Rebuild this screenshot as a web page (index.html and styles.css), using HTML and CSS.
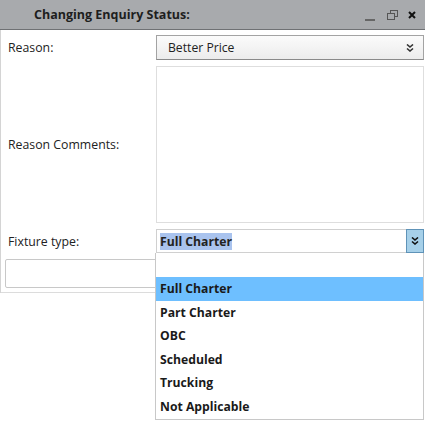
FILE: index.html
```html
<!DOCTYPE html>
<html lang="en">
<head>
    <meta charset="UTF-8">
    <title>Changing Enquiry Status</title>
    <link rel="stylesheet" href="styles.css">
</head>
<body>
    <div class="dialog">
        <div class="titlebar">
            <span class="title">Changing Enquiry Status:</span>
            <div class="controls">
                <span class="btn-min"></span>
                <svg class="btn-restore" width="11" height="10" viewBox="0 0 11 10">
                    <rect x="3.5" y="0.5" width="7" height="6" fill="none" stroke="#555" stroke-width="1"/>
                    <rect x="0.5" y="3.5" width="7" height="6" fill="#a8aaad" stroke="#555" stroke-width="1"/>
                </svg>
                <svg class="btn-close" width="8" height="8" viewBox="0 0 8 8">
                    <path d="M1 1 L7 7 M7 1 L1 7" stroke="#111" stroke-width="2"/>
                </svg>
            </div>
        </div>
        <div class="form">
            <label class="label">Reason:</label>
            <div class="select select-plain">
                <span class="value">Better Price</span>
                <svg class="chev" width="8" height="8" viewBox="0 0 8 8">
                    <path d="M1 0.5 L4 3 L7 0.5 M1 4.5 L4 7 L7 4.5" fill="none" stroke="#333" stroke-width="1.6"/>
                </svg>
            </div>

            <label class="label">Reason Comments:</label>
            <div class="textarea"></div>

            <label class="label">Fixture type:</label>
            <div class="select select-open">
                <span class="value"><span class="picked">Full Charter</span></span>
                <span class="arrow-btn">
                    <svg width="8" height="8" viewBox="0 0 8 8">
                        <path d="M1 0.5 L4 3 L7 0.5 M1 4.5 L4 7 L7 4.5" fill="none" stroke="#111" stroke-width="1.6"/>
                    </svg>
                </span>
            </div>

            <div class="wide-input"></div>
        </div>

        <ul class="dropdown">
            <li class="empty"></li>
            <li class="active">Full Charter</li>
            <li>Part Charter</li>
            <li>OBC</li>
            <li>Scheduled</li>
            <li>Trucking</li>
            <li>Not Applicable</li>
        </ul>
    </div>
</body>
</html>
```

FILE: styles.css
```css
html, body {
    min-height: 425px;
}
body {
    margin: 0;
    background: #ffffff;
    font-family: 'Open Sans', sans-serif;
    color: #222;
}
.dialog {
    position: relative;
    width: 425px;
    min-height: 425px;
    box-sizing: border-box;
}
.titlebar {
    height: 29px;
    background: #a8aaad;
    border-bottom: 1px solid #6f7174;
    display: flex;
    align-items: center;
    justify-content: space-between;
    padding: 0 9px 0 34px;
}
.title {
    font-size: 12.5px;
    font-weight: bold;
    color: #1e1e1e;
}
.controls {
    display: flex;
    align-items: center;
}
.btn-min {
    display: inline-block;
    width: 10px;
    height: 2px;
    background: #666;
    margin-top: 10px;
    margin-right: 12px;
}
.btn-restore {
    margin-right: 10px;
}
.form {
    display: grid;
    grid-template-columns: 155px 268px;
    grid-template-rows: 25px 157px 24px 29px;
    row-gap: 6px;
    padding: 5px 0;
    border-left: 1px solid #d4d4d4;
    box-sizing: border-box;
    position: relative;
}
.form::after {
    content: "";
    position: absolute;
    left: 0;
    bottom: 0;
    width: 155px;
    border-bottom: 1px solid #dcdcdc;
}
.label {
    font-size: 12.3px;
    padding-left: 7px;
    display: flex;
    align-items: center;
    color: #222;
}
.select {
    display: flex;
    align-items: center;
    justify-content: space-between;
    box-sizing: border-box;
    font-size: 12.2px;
}
.select-plain {
    background: linear-gradient(#fbfbfb, #ececec);
    border: 1px solid #a3a3a3;
    border-bottom-color: #8a8a8a;
    padding: 0 9px 0 11px;
}
.textarea {
    border: 1px solid #dedede;
    box-sizing: border-box;
}
.select-open {
    border: 1px solid #d0d0d0;
    background: #fff;
    padding-left: 3px;
    font-weight: bold;
}
.picked {
    background: #a9c3ee;
}
.arrow-btn {
    width: 18px;
    align-self: stretch;
    background: #a6d0e9;
    border: 1px solid #5f93b8;
    box-sizing: border-box;
    display: flex;
    align-items: center;
    justify-content: center;
    margin: -1px -1px -1px 0;
}
.wide-input {
    grid-column: 1 / 3;
    margin: 0 2px 0 4px;
    border: 1px solid #c8c8c8;
    border-radius: 2px;
}
.dropdown {
    position: absolute;
    left: 155px;
    top: 253px;
    width: 269px;
    margin: 0;
    padding: 0;
    list-style: none;
    background: #fff;
    border: 1px solid #c8c8c8;
    border-top: none;
    box-sizing: border-box;
    font-size: 12.2px;
    font-weight: bold;
    color: #1a1a1a;
}
.dropdown li {
    height: 23.6px;
    line-height: 23.6px;
    padding-left: 4px;
}
.dropdown .empty {
    height: 24px;
}
.dropdown .active {
    background: #6ebfff;
}
```
